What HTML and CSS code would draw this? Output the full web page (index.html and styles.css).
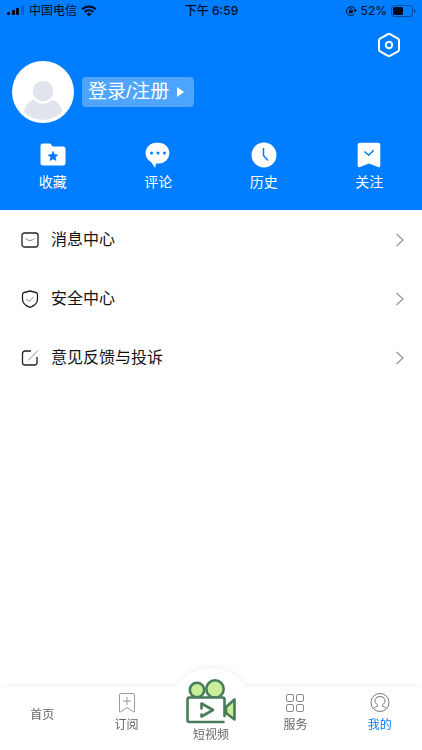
FILE: index.html
```html
<!DOCTYPE html>
<html lang="zh-CN">
<head>
    <meta charset="UTF-8">
    <meta name="viewport" content="width=device-width, initial-scale=1.0">
    <title>我的</title>
    <link rel="stylesheet" href="styles.css">
</head>
<body>
    <header class="header">
        <div class="status">
            <div class="status-left">
                <svg width="18" height="10" viewBox="0 0 18 10">
                    <rect x="0" y="6" width="3" height="3" rx="1"/>
                    <rect x="5" y="4" width="3" height="5" rx="1"/>
                    <rect x="9" y="2" width="3" height="7" rx="1"/>
                    <rect x="14" y="0" width="3" height="9" rx="1" opacity=".25"/>
                </svg>
                <span>中国电信</span>
                <svg width="16" height="12" viewBox="0 0 16 12">
                    <path d="M1.2 4.4a9.6 9.6 0 0 1 13.6 0M3.7 7a6.1 6.1 0 0 1 8.6 0" fill="none" stroke="#000b1f" stroke-width="2"/>
                    <path d="M5.6 9a3.4 3.4 0 0 1 4.8 0L8 11.5z"/>
                </svg>
            </div>
            <div class="status-time">下午 6:59</div>
            <div class="status-right">
                <svg width="12" height="12" viewBox="0 0 12 12">
                    <path d="M9.3 9.2a4.5 4.5 0 1 1 1-4.2" fill="none" stroke="#000b1f"/>
                    <path d="M8.4 5h3.6l-1.8 2.6z"/>
                    <rect x="3.8" y="5.2" width="4" height="3" rx=".5"/>
                    <path d="M4.6 5.5V4.4a1.2 1.2 0 0 1 2.4 0v1.1" fill="none" stroke="#000b1f" stroke-width=".8"/>
                </svg>
                <span>52%</span>
                <svg width="25" height="12" viewBox="0 0 25 12">
                    <rect x=".5" y=".5" width="21" height="11" rx="3" fill="none" stroke="#000b1f" opacity=".4"/>
                    <rect x="2" y="2" width="10" height="8" rx="1.5"/>
                    <path d="M23 4v4c1.8-.6 1.8-3.4 0-4z" opacity=".5"/>
                </svg>
            </div>
        </div>

        <div class="toolbar">
            <button class="icon-btn" type="button" aria-label="设置">
                <svg width="24" height="26" viewBox="0 0 24 26" fill="none" stroke="#fff" stroke-width="2">
                    <path d="M11 2.1a2 2 0 0 1 2 0l8 4.5a2 2 0 0 1 1 1.7v9.4a2 2 0 0 1-1 1.7l-8 4.5a2 2 0 0 1-2 0l-8-4.5a2 2 0 0 1-1-1.7V8.3a2 2 0 0 1 1-1.7z"/>
                    <circle cx="12" cy="13" r="3.2"/>
                </svg>
            </button>
        </div>

        <div class="profile">
            <svg class="avatar" viewBox="0 0 62 62">
                <circle cx="31" cy="31" r="31" fill="#fff"/>
                <circle cx="31" cy="30" r="10.3" fill="#e1e4ec"/>
                <path d="M11.5 51C14 43 18 39.5 22 38.8c5 5.2 13 5.2 18 0 4 .7 8 4.2 10.5 12.2a28 28 0 0 1-39 0z" fill="#e1e4ec"/>
            </svg>
            <button class="login" type="button">
                <span>登录/注册</span>
                <svg width="7" height="10" viewBox="0 0 7 10" fill="#fff"><path d="M0 0l7 5-7 5z"/></svg>
            </button>
        </div>

        <nav class="shortcuts">
            <a class="shortcut" href="#">
                <svg width="26" height="26" viewBox="0 0 26 26">
                    <path d="M3 1.5h6.5q1 0 1.5.8l1.5 2.2H23a2.5 2.5 0 0 1 2.5 2.5v14a2.5 2.5 0 0 1-2.5 2.5H3A2.5 2.5 0 0 1 .5 21V4A2.5 2.5 0 0 1 3 1.5z" fill="#fff"/>
                    <path d="M13 8.8l1.6 3.5 3.8.4-2.8 2.6.8 3.8-3.4-1.9-3.4 1.9.8-3.8-2.8-2.6 3.8-.4z" fill="#007eff"/>
                </svg>
                <span>收藏</span>
            </a>
            <a class="shortcut" href="#">
                <svg width="26" height="26" viewBox="0 0 26 26">
                    <path d="M12 .7h2a10.4 10.4 0 0 1 0 20.8h-3l-.6 3.4c-.1.7-.6.7-1 .2l-3-4.7A10.4 10.4 0 0 1 12 .7z" fill="#fff"/>
                    <g fill="#007eff"><circle cx="6.5" cy="11" r="1.5"/><circle cx="13" cy="11" r="1.5"/><circle cx="19.5" cy="11" r="1.5"/></g>
                </svg>
                <span>评论</span>
            </a>
            <a class="shortcut" href="#">
                <svg width="26" height="26" viewBox="0 0 26 26">
                    <circle cx="13" cy="13" r="12.5" fill="#fff"/>
                    <path d="M12.5 6v7.5l4.5 5" fill="none" stroke="#007eff" stroke-width="1.5"/>
                </svg>
                <span>历史</span>
            </a>
            <a class="shortcut" href="#">
                <svg width="26" height="26" viewBox="0 0 26 26">
                    <path d="M4 .7h18a2.3 2.3 0 0 1 2.3 2.3v20.5c0 1.5-1 2-2.3 1.5L13 21.5 4 25c-1.3.5-2.3 0-2.3-1.5V3A2.3 2.3 0 0 1 4 .7z" fill="#fff"/>
                    <path d="M8.5 9.5l4.2 3.8 5-5" fill="none" stroke="#007eff" stroke-width="1.5"/>
                </svg>
                <span>关注</span>
            </a>
        </nav>
    </header>

    <main class="menu">
        <a class="menu-item" href="#">
            <svg width="18" height="18" viewBox="0 0 18 18" fill="none" stroke="#222" stroke-width="1.3">
                <rect x="1" y="2" width="16" height="14" rx="2.5"/>
                <path d="M4.5 7.5q4.5 4 9 0" stroke="#888" stroke-width="1"/>
            </svg>
            <span class="menu-text">消息中心</span>
            <svg width="9" height="14" viewBox="0 0 9 14" fill="none" stroke="#999" stroke-width="1.3"><path d="M1.5 1L8 7l-6.5 6"/></svg>
        </a>
        <a class="menu-item" href="#">
            <svg width="18" height="18" viewBox="0 0 18 18" fill="none" stroke="#222" stroke-width="1.3">
                <path d="M9 1l6 1.5q1.5.4 1.5 2V9c0 4.5-3.5 7-7.5 8.3C5 16 1.5 13.5 1.5 9V4.5q0-1.6 1.5-2z"/>
                <path d="M5.5 9l2.5 2.5L12.5 7" stroke="#888" stroke-width="1"/>
            </svg>
            <span class="menu-text">安全中心</span>
            <svg width="9" height="14" viewBox="0 0 9 14" fill="none" stroke="#999" stroke-width="1.3"><path d="M1.5 1L8 7l-6.5 6"/></svg>
        </a>
        <a class="menu-item" href="#">
            <svg width="18" height="18" viewBox="0 0 18 18" fill="none" stroke="#222" stroke-width="1.3">
                <path d="M10 2H4a2.5 2.5 0 0 0-2.5 2.5v9A2.5 2.5 0 0 0 4 16h9.500a2.5 2.5 0 0 0 2.5-2.5V8"/>
                <path d="M7 11.5L17 1.5" stroke="#888" stroke-width="1"/>
            </svg>
            <span class="menu-text">意见反馈与投诉</span>
            <svg width="9" height="14" viewBox="0 0 9 14" fill="none" stroke="#999" stroke-width="1.3"><path d="M1.5 1L8 7l-6.5 6"/></svg>
        </a>
    </main>

    <nav class="tabbar">
        <a class="tab tab-text" href="#">首页</a>
        <a class="tab" href="#">
            <svg width="20" height="22" viewBox="0 0 20 22" fill="none" stroke="#999">
                <path d="M4 1.5h12a1.5 1.5 0 0 1 1.5 1.5v16.5q0 1-1 .4L10 15.5l-6.5 4.4q-1 .6-1-.4V3A1.5 1.5 0 0 1 4 1.5z"/>
                <path d="M10 5v8M6 9h8"/>
            </svg>
            <span>订阅</span>
        </a>
        <a class="tab tab-video" href="#">
            <svg width="52" height="46" viewBox="0 0 52 46" stroke="#487b59" stroke-width="2.6" stroke-linecap="round" stroke-linejoin="round">
                <circle cx="12" cy="11" r="7.2" fill="#c8ee9a"/>
                <circle cx="30" cy="10" r="8.7" fill="#c8ee9a"/>
                <path d="M39.5 37V20.5a2 2 0 0 0-2-2h-33a2 2 0 0 0-2 2V41a2 2 0 0 0 2 2h34" fill="#fff"/>
                <path d="M16.500 29.5v-5L28 31l-11.5 6.5v-2" fill="none"/>
                <path d="M41 28l8.5-7.5v20L41 34z" fill="#c8ee9a"/>
            </svg>
            <span>短视频</span>
        </a>
        <a class="tab" href="#">
            <svg width="20" height="22" viewBox="0 0 20 22" fill="none" stroke="#888">
                <rect x="1.5" y="2.5" width="7" height="7" rx="1.5"/>
                <rect x="11.5" y="2.5" width="7" height="7" rx="1.5"/>
                <rect x="1.5" y="12.5" width="7" height="7" rx="1.5"/>
                <rect x="11.5" y="12.5" width="7" height="7" rx="1.5"/>
            </svg>
            <span>服务</span>
        </a>
        <a class="tab active" href="#">
            <svg width="20" height="22" viewBox="0 0 20 22" fill="none" stroke="#777">
                <circle cx="10" cy="10.5" r="9"/>
                <path d="M3.5 16.5c1-1.5 3.5-1.5 4.5-3-2-1.5-3.5-4-3-6Q6 4.5 10 4.5T15 7.5c.5 2-1 4.5-3 6 1 1.5 3.5 1.5 4.5 3"/>
            </svg>
            <span>我的</span>
        </a>
    </nav>
</body>
</html>
```

FILE: styles.css
```css
* {
    box-sizing: border-box;
}

body {
    margin: 0;
    min-height: 100vh;
    display: flex;
    flex-direction: column;
    background: #fff;
    color: #111;
    font-family: "Liberation Sans", "Noto Sans CJK SC", sans-serif;
}

a {
    color: inherit;
    text-decoration: none;
}

button {
    border: 0;
    padding: 0;
    background: none;
    font-family: inherit;
    cursor: pointer;
}

svg {
    display: block;
    flex: none;
}

.header {
    background: #007eff;
    color: #fff;
    padding-bottom: 18px;
}

/* barra de estado */
.status {
    display: grid;
    grid-template-columns: 1fr auto 1fr;
    align-items: center;
    height: 22px;
    padding: 0 6px 0 7px;
    font-family: Inter, "Noto Sans CJK SC", sans-serif;
    font-size: 12px;
    line-height: 22px;
    color: #000b1f;
    fill: #000b1f;
}

.status-left,
.status-right {
    display: flex;
    align-items: center;
    gap: 4px;
}

.status-right {
    justify-content: flex-end;
}

.status-time {
    font-weight: 500;
}

.toolbar {
    display: flex;
    justify-content: flex-end;
    padding: 10px 21px 0;
}

.profile {
    display: flex;
    align-items: center;
    gap: 8px;
    padding: 3px 12px 0;
}

.avatar {
    width: 62px;
    height: 62px;
}

.login {
    display: flex;
    align-items: center;
    gap: 8px;
    height: 30px;
    padding: 0 10px 0 6px;
    border-radius: 4px;
    background: #4da5ff;
    color: #fff;
    font-size: 19px;
    line-height: 30px;
}

.shortcuts {
    display: flex;
    padding-top: 19px;
}

.shortcut {
    flex: 1;
    display: flex;
    flex-direction: column;
    align-items: center;
    gap: 4px;
    font-size: 14px;
    line-height: 20px;
}

.menu {
    flex: 1;
}

.menu-item {
    display: flex;
    align-items: center;
    gap: 12px;
    height: 59px;
    padding: 0 18px 0 21px;
    font-size: 16px;
    line-height: 20px;
}

.menu-text {
    flex: 1;
}

/* barra inferior */
.tabbar {
    position: relative;
    z-index: 0;
    display: flex;
    height: 63px;
    background: #fff;
    color: #666;
    font-size: 12px;
    line-height: 18px;
    filter: drop-shadow(0 -1px 3px rgba(0, 0, 0, 0.06));
}

.tabbar::before {
    content: "";
    position: absolute;
    z-index: -1;
    top: -19px;
    left: 50%;
    width: 82px;
    height: 82px;
    margin-left: -41px;
    border-radius: 50%;
    background: #fff;
}

.tab {
    flex: 1;
    display: flex;
    flex-direction: column;
    align-items: center;
    justify-content: flex-end;
    gap: 2px;
    padding-bottom: 16px;
}

.tab-text {
    justify-content: center;
    padding-bottom: 8px;
}

.tab-video {
    gap: 1px;
    padding-bottom: 6px;
}

.active {
    color: #007eff;
}
```
